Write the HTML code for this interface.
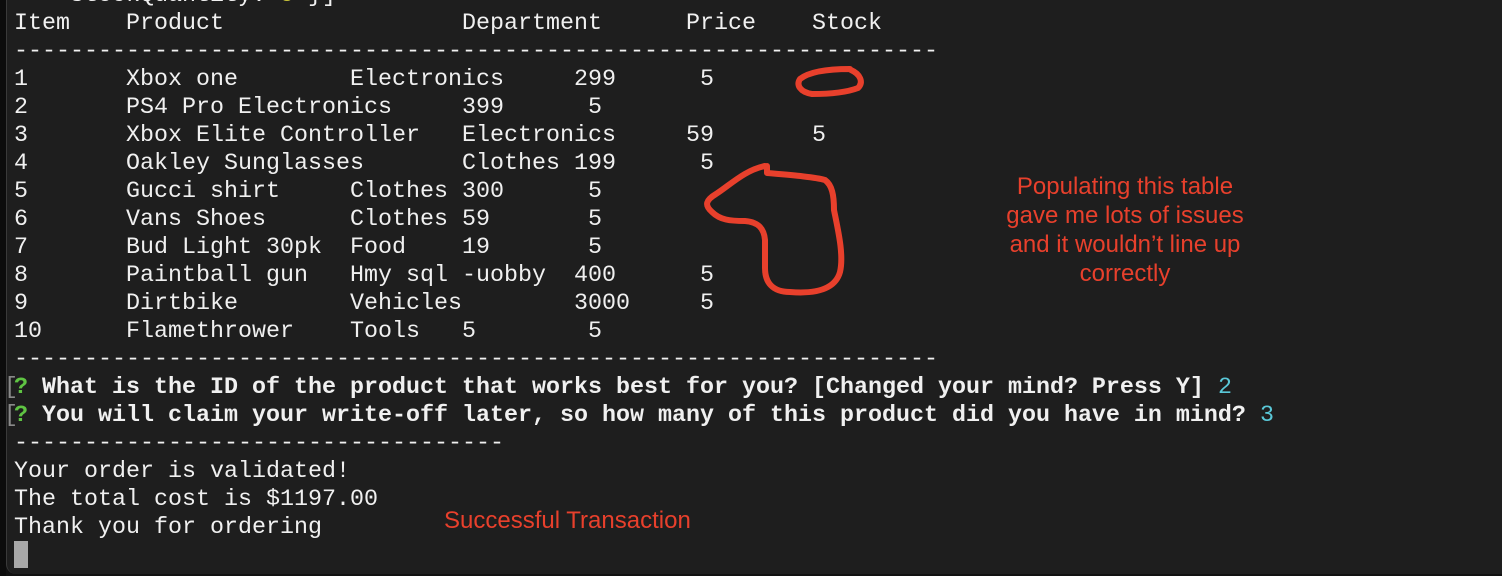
<!DOCTYPE html>
<html><head><meta charset="utf-8"><style>
html,body{margin:0;padding:0;width:1502px;height:576px;overflow:hidden;background:#111;}
#term{position:absolute;left:6px;top:0;width:1496px;height:574px;background:#1e1e1e;border-left:1px solid #3a3a3a;border-bottom-left-radius:10px;}
#strip{position:absolute;left:0;top:0;width:6px;height:576px;background:#0c0c0c;}
pre{position:absolute;left:14px;top:-18px;margin:0;font-family:"Liberation Mono",monospace;font-size:23.33px;line-height:28px;color:#f0f0f0;}
b{font-weight:bold;}
.g{color:#5fc443;font-weight:bold}
.c{color:#5ac8d8}
.y{color:#c9c43a}
.br{position:absolute;left:4px;font-family:"Liberation Mono",monospace;font-size:23.33px;line-height:28px;color:#8a8a8a}
.note{position:absolute;font-family:"Liberation Sans",Arial,sans-serif;color:#e8402c;font-size:24px;line-height:29px;text-align:center;}
#cur{position:absolute;left:14px;top:541px;width:14px;height:27px;background:#a8a8a8;}
svg{position:absolute;left:0;top:0}
</style></head><body>
<div id="strip"></div>
<div id="term"></div>
<pre>    StockQuantity: <span class="y">5</span> }]
Item    Product                 Department      Price    Stock
------------------------------------------------------------------
1       Xbox one        Electronics     299      5
2       PS4 Pro Electronics     399      5
3       Xbox Elite Controller   Electronics     59       5
4       Oakley Sunglasses       Clothes 199      5
5       Gucci shirt     Clothes 300      5
6       Vans Shoes      Clothes 59       5
7       Bud Light 30pk  Food    19       5
8       Paintball gun   Hmy sql -uobby  400      5
9       Dirtbike        Vehicles        3000     5
10      Flamethrower    Tools   5        5
------------------------------------------------------------------
<span class="g">?</span> <b>What is the ID of the product that works best for you? [Changed your mind? Press Y]</b> <span class="c">2</span>
<span class="g">?</span> <b>You will claim your write-off later, so how many of this product did you have in mind?</b> <span class="c">3</span>
-----------------------------------
Your order is validated!
The total cost is $1197.00
Thank you for ordering</pre>
<div class="br" style="top:374px">[</div>
<div class="br" style="top:402px">[</div>
<div id="cur"></div>
<div class="note" style="left:975px;top:172px;width:300px">Populating this table<br>gave me lots of issues<br>and it wouldn’t line up<br>correctly</div>
<div class="note" style="left:444px;top:506px;text-align:left">Successful Transaction</div>
<svg width="1502" height="576"><g fill="none" stroke="#e8402c" stroke-width="6" stroke-linecap="round" stroke-linejoin="round">
<path d="M851 70 C860 74 864 82 858 88 C845 93 825 94 812 94 C800 92 796 85 800 79 C810 71 830 69 850 69"/>
<path d="M767 166 L767 173 C790 175 815 177 825 180 C832 185 834 195 834 210 C838 230 844 255 840 272 C835 290 815 294 790 292 C772 292 765 282 765 268 L765 240 C764 228 758 222 745 221 C730 221 720 220 712 212 C704 205 706 200 716 194 C730 185 745 170 765 166"/>
</g></svg>
</body></html>
